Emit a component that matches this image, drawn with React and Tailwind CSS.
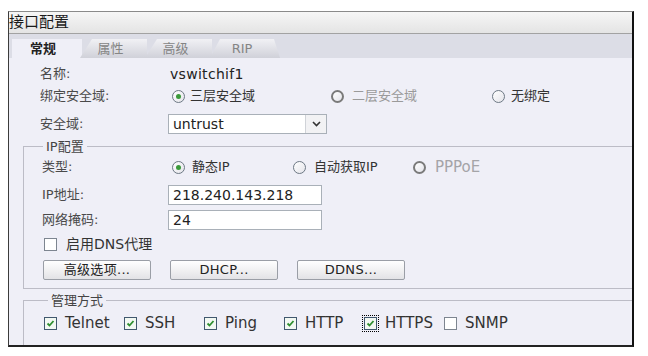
import React from 'react';

const font = { fontFamily: '"DejaVu Sans", "Noto Sans CJK SC", sans-serif' };

const Radio = ({ checked, disabled }) => (
  <span
    className={`inline-flex items-center justify-center w-[13px] h-[13px] rounded-full bg-gradient-to-br from-white to-[#e4e4ea] shrink-0 ${
      disabled ? 'border-2 border-[#7a7a7a]' : 'border border-[#6d7884]'
    }`}
  >
    {checked && <span className="w-[5px] h-[5px] rounded-full bg-[#3a9a3a]" />}
  </span>
);

const Checkbox = ({ checked, focus }) => (
  <span
    className={`inline-flex items-center justify-center w-[13px] h-[13px] shrink-0 border ${
      checked ? 'border-[#41586e] bg-[#f2f8f2]' : 'border-[#7d8590] bg-white'
    } ${focus ? 'outline outline-1 outline-dotted outline-black outline-offset-1' : ''}`}
  >
    {checked && (
      <svg width="9" height="9" viewBox="0 0 9 9">
        <path d="M1.5 4.5 L3.5 6.5 L7.5 2" fill="none" stroke="#2f8f2f" strokeWidth="1.8" />
      </svg>
    )}
  </span>
);

const Row = ({ label, labelW, children, mt }) => (
  <div className={`flex items-center h-[20px] ${mt}`}>
    <span className={`${labelW} shrink-0 text-[13px] text-[#4a4a4a]`}>{label}</span>
    {children}
  </div>
);

const TextBox = ({ value }) => (
  <div className="w-[154px] h-[20px] border border-[#a9b0b8] bg-white flex items-center pl-[4px] text-[14px] text-[#222]">
    {value}
  </div>
);

const Btn = ({ children }) => (
  <div className="w-[108px] h-[20px] rounded-[2px] border border-[#9a9ea6] bg-gradient-to-b from-white to-[#e3e3e6] flex items-center justify-center text-[13px] text-[#222] tracking-[0.3px]">
    {children}
  </div>
);

const tabs = ['属性', '高级', 'RIP'];
const services = [
  { name: 'Telnet', checked: true },
  { name: 'SSH', checked: true },
  { name: 'Ping', checked: true },
  { name: 'HTTP', checked: true },
  { name: 'HTTPS', checked: true, focus: true },
  { name: 'SNMP', checked: false },
];

export default function App() {
  return (
    <div className="w-[648px] h-[356px] bg-white pt-[11px] pl-[8px]" style={font}>
      <div className="w-[626px] h-[336px] flex flex-col border-l border-l-[#3c3c3c] border-t border-t-[#8a8a8a] border-r-2 border-r-[#111] border-b-2 border-b-[#222]">
        {/* title */}
        <div className="h-[22px] shrink-0 bg-gradient-to-b from-[#f6f6f6] to-[#e4e4e4] border-b border-[#a2a2a2] flex items-center text-[15px] text-[#1a1a1a] leading-none">
          接口配置
        </div>

        {/* tabs */}
        <div className="h-[24px] shrink-0 bg-[#dcdde6] flex items-end pl-[3px]">
          <div className="w-[70px] h-[19px] bg-[#efeff7] flex items-center pl-[18px] text-[13px] font-bold text-[#222]">
            常规
          </div>
          {tabs.map((t, i) => (
            <div
              key={t}
              className={`h-[19px] -ml-[2px] bg-gradient-to-b from-[#f1f1f5] to-[#d0d1d9] flex items-center justify-center text-[13px] text-[#858585] ${
                i === tabs.length - 1
                  ? 'w-[70px] [clip-path:polygon(0_100%,10px_0,calc(100%-6px)_0,100%_100%)]'
                  : 'w-[67px] [clip-path:polygon(0_100%,12px_0,100%_0,100%_100%)]'
              }`}
            >
              <span className="pr-[6px]">{t}</span>
            </div>
          ))}
        </div>

        {/* content */}
        <div className="flex-1 bg-[#efeff7] flex flex-col">
          <div className="pl-[31px]">
            <Row label="名称:" labelW="w-[128px]" mt="mt-[6px]">
              <span className="text-[14px] text-[#222] pl-[2px] tracking-[0.3px]">vswitchif1</span>
            </Row>
            <Row label="绑定安全域:" labelW="w-[128px]" mt="mt-[2px]">
              <div className="flex items-center pl-[4px]">
                <div className="w-[159px] flex items-center gap-[5px]">
                  <Radio checked />
                  <span className="text-[13px] text-[#333]">三层安全域</span>
                </div>
                <div className="w-[161px] flex items-center gap-[8px]">
                  <Radio disabled />
                  <span className="text-[13px] text-[#9a9a9a]">二层安全域</span>
                </div>
                <div className="flex items-center gap-[6px]">
                  <Radio />
                  <span className="text-[13px] text-[#333]">无绑定</span>
                </div>
              </div>
            </Row>
            <Row label="安全域:" labelW="w-[128px]" mt="mt-[8px]">
              <div className="w-[159px] h-[20px] border border-[#a9b0b8] bg-white flex">
                <span className="flex-1 flex items-center pl-[4px] text-[14px] text-[#222]">untrust</span>
                <span className="w-[21px] border-l border-[#d0d3d8] bg-[#f2f2f4] flex items-center justify-center">
                  <svg width="9" height="6" viewBox="0 0 9 6">
                    <path d="M1 1 L4.5 4.5 L8 1" fill="none" stroke="#333" strokeWidth="1.6" />
                  </svg>
                </span>
              </div>
            </Row>
          </div>

          {/* IP fieldset */}
          <div className="relative ml-[14px] mt-[12px] border-l border-t border-b border-[#bcbcc6] pl-[18px] pt-[10px] pb-[8px]">
            <span className="absolute -top-[10px] left-[19px] px-[3px] bg-[#efeff7] text-[13px] text-[#444]">
              IP配置
            </span>
            <Row label="类型:" labelW="w-[126px]">
              <div className="flex items-center pl-[4px]">
                <div className="w-[121px] flex items-center gap-[7px]">
                  <Radio checked />
                  <span className="text-[13px] text-[#333]">静态IP</span>
                </div>
                <div className="w-[120px] flex items-center gap-[8px]">
                  <Radio />
                  <span className="text-[13px] text-[#333]">自动获取IP</span>
                </div>
                <div className="flex items-center gap-[9px]">
                  <Radio disabled />
                  <span className="text-[15px] text-[#a4a4a8]">PPPoE</span>
                </div>
              </div>
            </Row>
            <Row label="IP地址:" labelW="w-[126px]" mt="mt-[8px]">
              <TextBox value="218.240.143.218" />
            </Row>
            <Row label="网络掩码:" labelW="w-[126px]" mt="mt-[5px]">
              <TextBox value="24" />
            </Row>
            <div className="flex items-center h-[20px] mt-[4px] pl-[2px] gap-[9px]">
              <Checkbox />
              <span className="text-[14px] text-[#333]">启用DNS代理</span>
            </div>
            <div className="flex items-center gap-[19px] mt-[6px] pl-[1px]">
              <Btn>高级选项...</Btn>
              <Btn>DHCP...</Btn>
              <Btn>DDNS...</Btn>
            </div>
          </div>

          {/* management fieldset */}
          <div className="relative flex-1 ml-[14px] mt-[11px] border-l border-t border-[#bcbcc6] pl-[20px] pt-[12px]">
            <span className="absolute -top-[10px] left-[24px] px-[3px] bg-[#efeff7] text-[13px] text-[#444]">
              管理方式
            </span>
            <div className="flex items-center h-[20px]">
              {services.map((s) => (
                <div key={s.name} className="w-[80px] flex items-center gap-[8px]">
                  <Checkbox checked={s.checked} focus={s.focus} />
                  <span className="text-[15px] text-[#333]">{s.name}</span>
                </div>
              ))}
            </div>
          </div>
        </div>
      </div>
    </div>
  );
}
